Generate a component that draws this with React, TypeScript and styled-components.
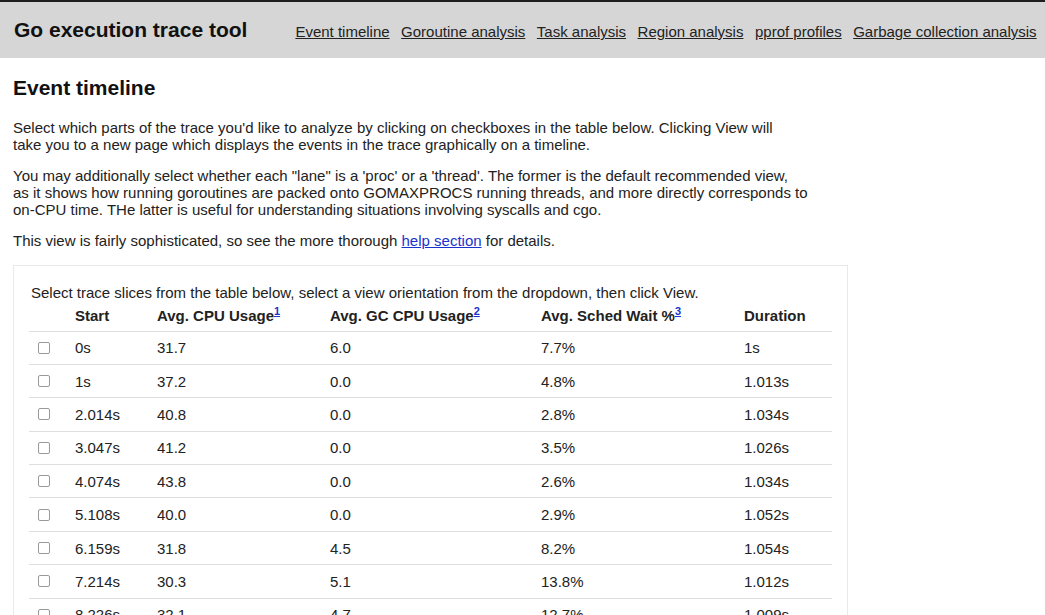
import React from "react";
import styled, { createGlobalStyle } from "styled-components";

const GlobalStyle = createGlobalStyle`
  html, body { margin: 0; padding: 0; overflow: hidden; background: #fff; }
  body {
    font-family: "Liberation Sans", Arial, Helvetica, sans-serif;
    font-size: 15px;
    color: #222;
  }
`;

const Header = styled.header`
  display: flex;
  align-items: baseline;
  gap: 48px;
  height: 58px;
  box-sizing: border-box;
  padding: 16px 14px 0;
  background: #d6d6d6;
  border-top: 2px solid #1e1e1e;
  white-space: nowrap;
`;

const Title = styled.h1`
  margin: 0;
  flex-shrink: 0;
  font-size: 21px;
  font-weight: bold;
  color: #111;
`;

const Nav = styled.nav`
  display: flex;
  flex-shrink: 0;
  gap: 11.5px;
`;

const NavLink = styled.a`
  color: #222;
  font-size: 15px;
  text-decoration: underline;
`;

const Main = styled.main`
  padding: 18px 13px 0;
`;

const H2 = styled.h2`
  margin: 0 0 19px;
  font-size: 21px;
  font-weight: bold;
  color: #111;
`;

const P = styled.p`
  margin: 0 0 14px;
  line-height: 17px;
  white-space: nowrap;
`;

const HelpLink = styled.a`
  color: #1a33cc;
  text-decoration: underline;
`;

const Panel = styled.section`
  margin-top: 16px;
  width: 835px;
  box-sizing: border-box;
  border: 1px solid #e9e9e9;
  padding: 18px 15px 0;
`;

const Caption = styled.div`
  line-height: 17px;
  margin-left: 2px;
`;

const Table = styled.table`
  border-collapse: collapse;
  width: 803px;
  table-layout: fixed;
`;

const Th = styled.th<{ $w: number }>`
  box-sizing: border-box;
  width: ${(p) => p.$w}px;
  text-align: left;
  font-weight: bold;
  padding: 0 0 0 8px;
  height: 30px;
  vertical-align: middle;
  border-bottom: 1px solid #dedede;
  color: #222;
  white-space: nowrap;
`;

const Td = styled.td<{ $box?: boolean }>`
  box-sizing: border-box;
  padding: 0 0 0 ${(p) => (p.$box ? 9 : 8)}px;
  height: 33.4px;
  vertical-align: middle;
  border-bottom: 1px solid #dedede;
`;

const Sup = styled.sup`
  font-size: 11px;
  line-height: 0;
  a { color: #1a33cc; }
`;

const Box = styled.span`
  display: block;
  width: 12px;
  height: 12px;
  box-sizing: border-box;
  border: 1px solid #9a9a9a;
  border-radius: 2px;
  background: #fff;
`;

const rows = [
  ["0s", "31.7", "6.0", "7.7%", "1s"],
  ["1s", "37.2", "0.0", "4.8%", "1.013s"],
  ["2.014s", "40.8", "0.0", "2.8%", "1.034s"],
  ["3.047s", "41.2", "0.0", "3.5%", "1.026s"],
  ["4.074s", "43.8", "0.0", "2.6%", "1.034s"],
  ["5.108s", "40.0", "0.0", "2.9%", "1.052s"],
  ["6.159s", "31.8", "4.5", "8.2%", "1.054s"],
  ["7.214s", "30.3", "5.1", "13.8%", "1.012s"],
  ["8.226s", "32.1", "4.7", "12.7%", "1.009s"],
];

const links = [
  "Event timeline",
  "Goroutine analysis",
  "Task analysis",
  "Region analysis",
  "pprof profiles",
  "Garbage collection analysis",
];

export default function App() {
  return (
    <>
      <GlobalStyle />
      <Header>
        <Title>Go execution trace tool</Title>
        <Nav>
          {links.map((l) => (
            <NavLink key={l} href="#">
              {l}
            </NavLink>
          ))}
        </Nav>
      </Header>
      <Main>
        <H2>Event timeline</H2>
        <P>
          Select which parts of the trace you'd like to analyze by clicking on checkboxes in the table below. Clicking View will
          <br />
          take you to a new page which displays the events in the trace graphically on a timeline.
        </P>
        <P>
          You may additionally select whether each "lane" is a 'proc' or a 'thread'. The former is the default recommended view,
          <br />
          as it shows how running goroutines are packed onto GOMAXPROCS running threads, and more directly corresponds to
          <br />
          on-CPU time. THe latter is useful for understanding situations involving syscalls and cgo.
        </P>
        <P>
          This view is fairly sophisticated, so see the more thorough <HelpLink href="#">help section</HelpLink> for details.
        </P>
        <Panel>
          <Caption>Select trace slices from the table below, select a view orientation from the dropdown, then click View.</Caption>
          <Table>
            <thead>
              <tr>
                <Th $w={38}></Th>
                <Th $w={82}>Start</Th>
                <Th $w={173}>
                  Avg. CPU Usage<Sup><a href="#">1</a></Sup>
                </Th>
                <Th $w={211}>
                  Avg. GC CPU Usage<Sup><a href="#">2</a></Sup>
                </Th>
                <Th $w={203}>
                  Avg. Sched Wait %<Sup><a href="#">3</a></Sup>
                </Th>
                <Th $w={96}>Duration</Th>
              </tr>
            </thead>
            <tbody>
              {rows.map((r) => (
                <tr key={r[0]}>
                  <Td $box>
                    <Box />
                  </Td>
                  {r.map((c, i) => (
                    <Td key={i}>{c}</Td>
                  ))}
                </tr>
              ))}
            </tbody>
          </Table>
        </Panel>
      </Main>
    </>
  );
}
